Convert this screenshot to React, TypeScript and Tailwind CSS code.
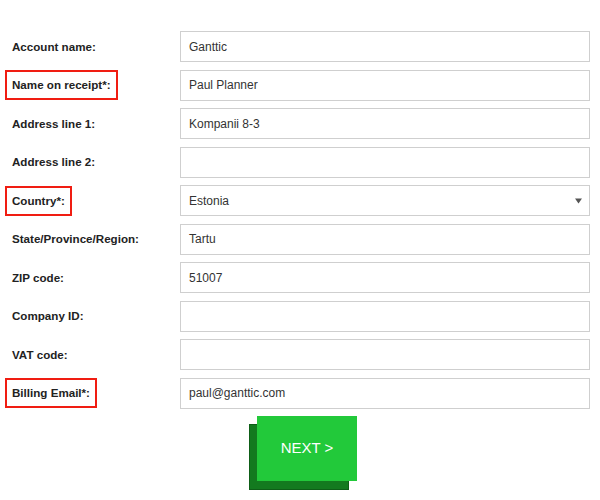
import React from 'react';

interface Field {
  label: string;
  value: string;
  marked?: boolean;
  select?: boolean;
}

const fields: Field[] = [
  { label: 'Account name:', value: 'Ganttic' },
  { label: 'Name on receipt*:', value: 'Paul Planner', marked: true },
  { label: 'Address line 1:', value: 'Kompanii 8-3' },
  { label: 'Address line 2:', value: '' },
  { label: 'Country*:', value: 'Estonia', marked: true, select: true },
  { label: 'State/Province/Region:', value: 'Tartu' },
  { label: 'ZIP code:', value: '51007' },
  { label: 'Company ID:', value: '' },
  { label: 'VAT code:', value: '' },
  { label: 'Billing Email*:', value: 'paul@ganttic.com', marked: true },
];

const App: React.FC = () => {
  return (
    <div
      className="w-[600px] h-[500px] bg-white pt-[31px] pl-[12px] overflow-hidden"
      style={{ fontFamily: '"Liberation Sans", Arial, sans-serif' }}
    >
      {fields.map((f) => (
        <div key={f.label} className="flex items-center h-[31px] mb-[7.5px]">
          <div className="w-[168px] shrink-0 flex items-center">
            {f.marked ? (
              <span className="-ml-[7px] border-2 border-[#f01d12] px-[5px] h-[30px] flex items-center text-[11.6px] font-bold text-[#222]">
                {f.label}
              </span>
            ) : (
              <span className="text-[11.6px] font-bold text-[#222]">{f.label}</span>
            )}
          </div>
          <div className="w-[410px] h-[31px] border border-[#cfcfcf] flex items-center justify-between pl-[8px] pr-[7px] text-[12px] text-[#333]">
            <span>{f.value}</span>
            {f.select && (
              <svg width="7" height="6" viewBox="0 0 7 6">
                <path d="M0 0.5 L7 0.5 L3.5 5.5 Z" fill="#555" />
              </svg>
            )}
          </div>
        </div>
      ))}
      <div className="relative w-[108px] h-[74px] ml-[237px]">
        <div className="absolute left-0 top-[8px] w-[100px] h-[66px] bg-[#137a1f] border border-[#0e5e17]" />
        <button className="absolute left-[8px] top-0 w-[100px] h-[65px] bg-[#22c93a] text-white text-[15px] flex items-center justify-center">
          NEXT &gt;
        </button>
      </div>
    </div>
  );
};

export default App;
